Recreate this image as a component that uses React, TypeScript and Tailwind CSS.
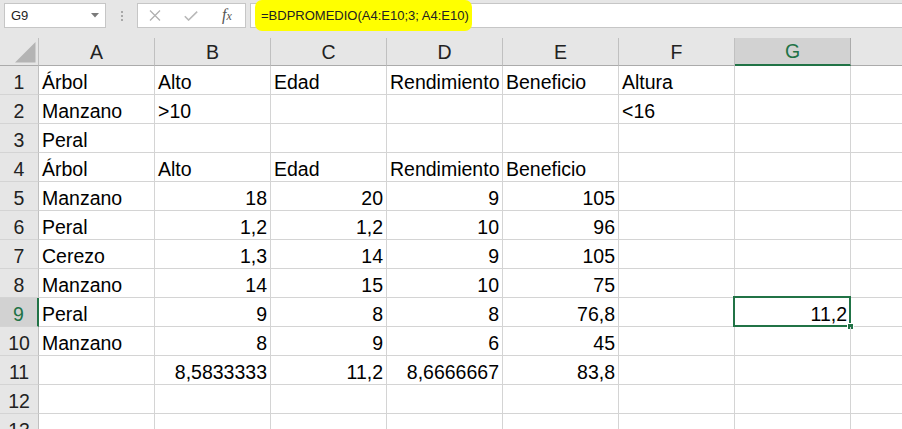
import React from "react";

const cols = ["A", "B", "C", "D", "E", "F", "G"];

const data: string[][] = [
  ["Árbol", "Alto", "Edad", "Rendimiento", "Beneficio", "Altura", ""],
  ["Manzano", ">10", "", "", "", "<16", ""],
  ["Peral", "", "", "", "", "", ""],
  ["Árbol", "Alto", "Edad", "Rendimiento", "Beneficio", "", ""],
  ["Manzano", "18", "20", "9", "105", "", ""],
  ["Peral", "1,2", "1,2", "10", "96", "", ""],
  ["Cerezo", "1,3", "14", "9", "105", "", ""],
  ["Manzano", "14", "15", "10", "75", "", ""],
  ["Peral", "9", "8", "8", "76,8", "", "11,2"],
  ["Manzano", "8", "9", "6", "45", "", ""],
  ["", "8,5833333", "11,2", "8,6666667", "83,8", "", ""],
  ["", "", "", "", "", "", ""],
  ["", "", "", "", "", "", ""],
];

const isNum = (s: string) => /^[\d,]+$/.test(s);

export default function App() {
  return (
    <div className="w-[902px] h-[429px] overflow-hidden bg-white font-['Liberation_Sans',Arial,sans-serif] text-black">
      {/* Formula bar */}
      <div className="h-[38px] bg-[#e6e6e6] flex items-start pt-[3px]">
        <div className="ml-[4px] w-[102px] h-[25px] shrink-0 bg-white border border-[#c6c6c6] flex items-center justify-between pl-[6px] pr-[6px]">
          <span className="text-[13px] leading-[15px] text-[#222]">G9</span>
          <svg width="8" height="5" viewBox="0 0 8 5">
            <path d="M0 0H8L4 4.5Z" fill="#7a7a7a" />
          </svg>
        </div>
        <div className="w-[31px] h-[25px] shrink-0 flex flex-col items-center justify-center gap-[2px]">
          <div className="w-[2px] h-[2px] bg-[#a8a8a8]" />
          <div className="w-[2px] h-[2px] bg-[#a8a8a8]" />
          <div className="w-[2px] h-[2px] bg-[#a8a8a8]" />
        </div>
        <div className="w-[109px] h-[25px] shrink-0 bg-white border border-[#c6c6c6] flex items-center">
          <svg className="ml-[11px]" width="12" height="11" viewBox="0 0 12 11">
            <path d="M1 0.5L11 10.5M11 0.5L1 10.5" stroke="#b0b0b0" strokeWidth="1.3" />
          </svg>
          <svg className="ml-[23px]" width="14" height="10" viewBox="0 0 14 10">
            <path d="M0.8 5.2L4.6 9L13.2 0.6" stroke="#b8b8b8" strokeWidth="1.6" fill="none" />
          </svg>
          <span className="ml-[24px] italic font-['Liberation_Serif',serif] text-[16px] leading-[16px] text-[#555]">
            f<span className="text-[12px]">x</span>
          </span>
        </div>
        <div className="ml-[4px] flex-1 h-[25px] bg-white border border-r-0 border-[#c6c6c6] relative flex items-center">
          <div className="absolute left-[4px] top-[-4px] w-[217px] h-[31px] bg-[#ffff00] rounded-[7px]" />
          <span className="relative pl-[10px] text-[13px] leading-[15px] text-[#222]">
            =BDPROMEDIO(A4:E10;3; A4:E10)
          </span>
        </div>
      </div>

      {/* Column headers */}
      <div className="flex h-[28px] bg-[#e6e6e6] text-[19.5px] leading-[20px]">
        <div className="w-[39px] shrink-0 border-r border-b border-r-[#c0c0c0] border-b-[#ababab] relative">
          <svg className="absolute left-[15px] top-[4px]" width="21" height="21" viewBox="0 0 21 21">
            <path d="M0 20.5L20.5 0V20.5Z" fill="#b4b4b4" />
          </svg>
        </div>
        {cols.map((c) =>
          c === "G" ? (
            <div
              key={c}
              className="w-[116px] shrink-0 bg-[#d2d2d2] border-r border-r-[#ababab] border-b-2 border-b-[#217346] flex items-center justify-center text-[#217346]"
            >
              {c}
            </div>
          ) : (
            <div
              key={c}
              className="w-[116px] shrink-0 border-r border-r-[#c0c0c0] border-b border-b-[#ababab] flex items-center justify-center text-[#222]"
            >
              {c}
            </div>
          )
        )}
        <div className="flex-1 border-b border-b-[#ababab]" />
      </div>

      {/* Rows */}
      {data.map((row, ri) => {
        const sel = ri === 8;
        return (
          <div key={ri} className="flex h-[29px] text-[19.5px] leading-[20px]">
            {sel ? (
              <div className="w-[39px] shrink-0 bg-[#d2d2d2] border-r-2 border-r-[#217346] border-b border-b-[#d4d4d4] flex items-end justify-center pb-[2px] text-[#217346]">
                {ri + 1}
              </div>
            ) : (
              <div className="w-[39px] shrink-0 bg-[#e6e6e6] border-r border-r-[#c0c0c0] border-b border-b-[#d4d4d4] flex items-end justify-center pb-[2px] text-[#222]">
                {ri + 1}
              </div>
            )}
            {row.map((v, ci) => {
              const isSel = sel && ci === 6;
              return (
                <div
                  key={ci}
                  className={
                    "w-[116px] shrink-0 border-r border-b border-[#d4d4d4] flex items-end pb-[2px] relative whitespace-nowrap " +
                    (isNum(v) ? "justify-end pr-[3px]" : "justify-start pl-[3px]")
                  }
                >
                  {v}
                  {isSel && (
                    <>
                      <div className="absolute -left-[2px] -top-[2px] -right-[1px] -bottom-[1px] border-2 border-[#217346]" />
                      <div className="absolute left-[112px] top-[25px] w-[7px] h-[7px] bg-[#217346] border border-white" />
                    </>
                  )}
                </div>
              );
            })}
            <div className="flex-1 border-b border-[#d4d4d4]" />
          </div>
        );
      })}
    </div>
  );
}
